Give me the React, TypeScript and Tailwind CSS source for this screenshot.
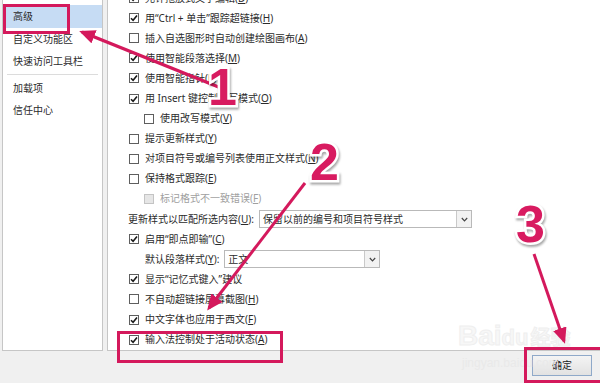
import React from 'react';

const FONT = { fontFamily: '"Noto Sans", "Noto Sans CJK SC", sans-serif' };

interface Row {
  label: string;
  key?: string;
  checked?: boolean;
  indent?: boolean;
  disabled?: boolean;
}

const Check: React.FC<{ checked?: boolean; disabled?: boolean }> = ({ checked, disabled }) => (
  <span
    className={`inline-flex h-[10px] w-[10px] shrink-0 items-center justify-center border ${
      disabled ? 'border-[#c4c4c4] bg-[#e6e6e6]' : 'border-[#5e5e5e] bg-white'
    }`}
  >
    {checked && (
      <svg width="8" height="8" viewBox="0 0 8 8">
        <path d="M1 4.2 L3.1 6.3 L7 1.6" fill="none" stroke="#1a1a1a" strokeWidth="1.6" />
      </svg>
    )}
  </span>
);

const Label: React.FC<{ label: string; k?: string }> = ({ label, k }) => (
  <span className="whitespace-nowrap">
    {label}
    {k && (
      <>
        (<span className="underline">{k}</span>)
      </>
    )}
  </span>
);

const Option: React.FC<{ row: Row }> = ({ row }) => (
  <div
    className={`flex h-[20.1px] items-center gap-[6px] ${row.indent ? 'pl-[36px]' : 'pl-[21px]'} ${
      row.disabled ? 'text-[#a0a0a0]' : 'text-[#2b2b2b]'
    }`}
  >
    <Check checked={row.checked} disabled={row.disabled} />
    <Label label={row.label} k={row.key} />
  </div>
);

const Select: React.FC<{ value: string; width: string }> = ({ value, width }) => (
  <div className={`flex h-[18px] shrink-0 items-stretch border border-[#b9b9b9] bg-white ${width}`}>
    <span className="flex-1 truncate pl-[3px] leading-[16px] text-[#2b2b2b]">{value}</span>
    <span className="flex w-[15px] items-center justify-center border-l border-[#c9c9c9] bg-[#f2f2f2]">
      <svg width="7" height="5" viewBox="0 0 7 5">
        <path d="M0.8 1 L3.5 3.8 L6.2 1" fill="none" stroke="#444" strokeWidth="1.2" />
      </svg>
    </span>
  </div>
);

const topRows: Row[] = [
  { label: '允许拖放式文字编辑', key: 'D', checked: true },
  { label: '用“Ctrl + 单击”跟踪超链接', key: 'H', checked: true },
  { label: '插入自选图形时自动创建绘图画布', key: 'A' },
  { label: '使用智能段落选择', key: 'M', checked: true },
  { label: '使用智能指针', key: 'E', checked: true },
  { label: '用 Insert 键控制改写模式', key: 'O', checked: true },
  { label: '使用改写模式', key: 'V', indent: true },
  { label: '提示更新样式', key: 'Y' },
  { label: '对项目符号或编号列表使用正文样式', key: 'N' },
  { label: '保持格式跟踪', key: 'E' },
  { label: '标记格式不一致错误', key: 'F', indent: true, disabled: true },
];

const bottomRows: Row[] = [
  { label: '显示“记忆式键入”建议', checked: true },
  { label: '不自动超链接屏幕截图', key: 'H' },
  { label: '中文字体也应用于西文', key: 'F', checked: true },
  { label: '输入法控制处于活动状态', key: 'A', checked: true },
];

const Num: React.FC<{ n: string; className: string }> = ({ n, className }) => (
  <div
    className={`absolute text-[52px] font-bold leading-none text-[#d81b60] [paint-order:stroke_fill] [-webkit-text-stroke:5px_white] [filter:drop-shadow(1px_2px_1px_rgba(0,0,0,0.35))] ${className}`}
    style={{ fontFamily: '"Liberation Sans", Arial, sans-serif' }}
  >
    {n}
  </div>
);

export default function App() {
  return (
    <div className="relative flex h-[383px] w-[600px] flex-col overflow-hidden bg-[#f0f0f0] text-[10px]" style={FONT}>
      <div className="flex h-[351px] gap-[4px] pl-[2px]">
        {/* sidebar */}
        <div className="w-[101px] shrink-0 border border-t-0 border-[#c6c6c6] bg-white pt-[5px] text-[#2b2b2b]">
          <div className="flex h-[23px] items-center bg-[#c6dcf4] pl-[10px]">高级</div>
          <div className="flex h-[22px] items-center whitespace-nowrap pl-[10px]">自定义功能区</div>
          <div className="flex h-[22px] items-center whitespace-nowrap pl-[10px]">快速访问工具栏</div>
          <div className="mx-[4px] my-[2px] border-t border-[#dcdcdc]" />
          <div className="flex h-[22px] items-center pl-[10px]">加载项</div>
          <div className="flex h-[22px] items-center pl-[10px]">信任中心</div>
        </div>
        {/* main panel */}
        <div className="w-[520px] shrink-0 overflow-hidden border border-t-0 border-[#c6c6c6] bg-white">
          <div className="mt-[-12px]">
            {topRows.map((r, i) => (
              <Option key={i} row={r} />
            ))}
            <div className="flex h-[20.1px] items-center gap-[5px] pl-[20px] text-[#2b2b2b]">
              <span className="whitespace-nowrap">
                更新样式以匹配所选内容(<span className="underline">U</span>):
              </span>
              <Select value="保留以前的编号和项目符号样式" width="w-[213px]" />
            </div>
            <Option row={{ label: '启用“即点即输”', key: 'C', checked: true }} />
            <div className="flex h-[20.1px] items-center gap-[5px] pl-[37px] text-[#2b2b2b]">
              <span className="whitespace-nowrap">
                默认段落样式(<span className="underline">Y</span>):
              </span>
              <Select value="正文" width="w-[156px]" />
            </div>
            {bottomRows.map((r, i) => (
              <Option key={i} row={r} />
            ))}
          </div>
        </div>
      </div>

      {/* footer */}
      <div className="flex flex-1 items-start justify-end pr-[8px] pt-[4px]">
        <button className="h-[21px] w-[60px] border border-[#8fa9c9] bg-gradient-to-b from-[#f4f4f4] to-[#e2e2e2] text-[10px] text-[#1a1a1a]">
          确定
        </button>
      </div>

      {/* watermark */}
      <div className="pointer-events-none absolute left-[458px] top-[322px] text-[28px] font-bold leading-none text-[#f7f7f7] [-webkit-text-stroke:1px_#efefef]" style={{ fontFamily: '"Liberation Sans", sans-serif' }}>
        Bai<span className="text-[22px]">du</span>
        <span className="ml-[2px] text-[20px]" style={FONT}>经验</span>
      </div>
      <div className="pointer-events-none absolute left-[462px] top-[354px] text-[12px] text-[#e9e9e9]" style={{ fontFamily: '"Liberation Sans", sans-serif' }}>
        jingyan.baidu.com
      </div>

      {/* annotations */}
      <div className="pointer-events-none absolute left-[3px] top-[4px] h-[30px] w-[67px] border-[3px] border-[#d4195c]" />
      <div className="pointer-events-none absolute left-[117px] top-[331px] h-[32px] w-[166px] border-[3px] border-[#d4195c]" />
      <div className="pointer-events-none absolute left-[524px] top-[347px] h-[36px] w-[80px] border-[3px] border-[#d4195c]" />

      <svg className="pointer-events-none absolute left-0 top-0" width="600" height="383">
        <defs>
          <marker id="ah" markerWidth="16" markerHeight="14" refX="13" refY="7" orient="auto" markerUnits="userSpaceOnUse">
            <path d="M0 0 L16 7 L0 14 Z" fill="#d4195c" />
          </marker>
        </defs>
        <line x1="226" y1="90" x2="82" y2="32" stroke="#d4195c" strokeWidth="3.5" markerEnd="url(#ah)" />
        <line x1="305" y1="183" x2="209" y2="308" stroke="#d4195c" strokeWidth="3" markerEnd="url(#ah)" />
        <line x1="534" y1="254" x2="564" y2="341" stroke="#d4195c" strokeWidth="3" markerEnd="url(#ah)" />
      </svg>

      <Num n="1" className="left-[208px] top-[61px]" />
      <Num n="2" className="left-[310px] top-[136px]" />
      <Num n="3" className="left-[516px] top-[198px]" />
    </div>
  );
}
